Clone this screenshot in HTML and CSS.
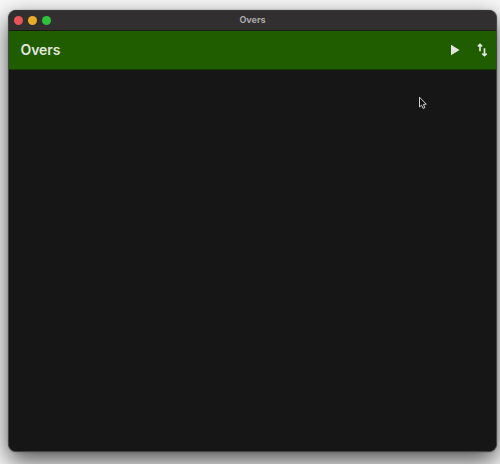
FILE: index.html
```html
<!DOCTYPE html>
<html lang="en">
<head>
<meta charset="utf-8">
<title>Overs</title>
<link rel="stylesheet" href="styles.css">
</head>
<body>
<main class="window">
  <header class="titlebar">
    <div class="lights"><span class="light red"></span><span class="light yellow"></span><span class="light green"></span></div>
    <span class="caption">Overs</span>
  </header>
  <nav class="appbar">
    <h1>Overs</h1>
    <div class="actions">
      <svg width="14" height="14" viewBox="0 0 14 14"><path d="M3 1.8v10.4l8.6-5.2z" fill="#e2e6df"/></svg>
      <svg width="14" height="14" viewBox="0 0 14 14"><path d="M5 8.2V1.8M2.9 3.3 5 1.4 7.1 3.3M9.5 5.2v6.8M7.3 10.6l2.2 2 2.2-2" fill="none" stroke="#e2e6df" stroke-width="1.7"/></svg>
    </div>
  </nav>
  <section class="content"></section>
</main>
<svg class="cursor" width="10" height="14" viewBox="0 0 10 14"><path d="M1.5 1.2v9.8l2.1-1.8 1.5 3.2 1.8-.8-1.5-3.2 2.9-.2z" fill="#111" stroke="#d0d0d0" stroke-width="1"/></svg>
</body>
</html>
```
FILE: styles.css
```css
* { box-sizing: border-box; }
body {
  margin: 0;
  height: 464px;
  padding: 10px 3px 12px 8px;
  overflow: hidden;
  background: #f8f8f8;
  font-family: Inter, "Liberation Sans", sans-serif;
}
.window {
  height: 442px;
  display: flex;
  flex-direction: column;
  overflow: hidden;
  border: 1px solid #454545;
  border-top-color: #353535;
  border-radius: 8px;
  background: #161616;
  box-shadow: 0 9px 24px rgba(0, 0, 0, .68), 0 0 2px rgba(0, 0, 0, .3);
}
.titlebar {
  height: 20px;
  flex: none;
  display: grid;
  grid-template-columns: 1fr auto 1fr;
  align-items: center;
  padding-bottom: 1px;
  background: #312f2f;
  border-bottom: 1px solid #171b13;
}
.lights { display: flex; gap: 5px; padding-left: 5px; }
.light { width: 9px; height: 9px; border-radius: 50%; }
.red { background: #e65557; }
.yellow { background: #e9ad28; }
.green { background: #32c13c; }
.caption { font-size: 9px; font-weight: 700; line-height: 12px; color: #aaa8a8; }
.appbar {
  height: 38px;
  flex: none;
  display: flex;
  align-items: center;
  justify-content: space-between;
  padding: 0 7px 0 11.5px;
  background: #1f5d00;
}
.appbar h1 {
  margin: 0;
  font-size: 14px;
  font-weight: 600;
  line-height: 20px;
  letter-spacing: -.1px;
  color: #e2e6df;
}
.actions { display: flex; gap: 13px; }
.actions svg { display: block; }
.content { flex: 1; background: #161616; border-top: 1px solid #173b06; }
.cursor { position: absolute; left: 418px; top: 96px; }
```
